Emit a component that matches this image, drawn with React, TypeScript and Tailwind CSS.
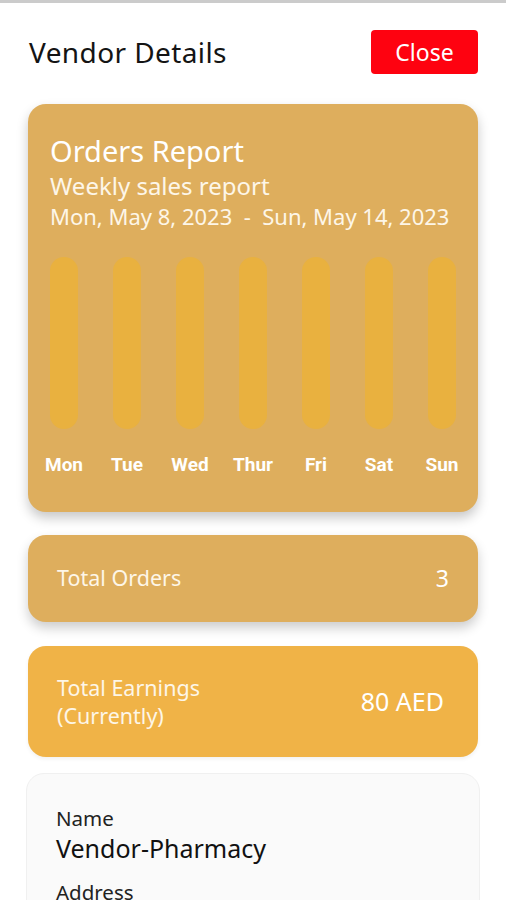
import React from "react";

const days = ["Mon", "Tue", "Wed", "Thur", "Fri", "Sat", "Sun"];

export default function App() {
  return (
    <div className="h-[900px] bg-white border-t-[3px] border-[#cbcbcb] font-['Noto_Sans',sans-serif] overflow-hidden">
      <div className="flex items-center justify-between pl-[29px] pr-[28px] pt-[27px]">
        <h1 className="text-[28px] leading-[34px] tracking-[0.4px] text-[#141414]">Vendor Details</h1>
        <button className="h-[44px] w-[107px] rounded-[4px] bg-[#fe0210] text-white text-[23px] leading-none">
          Close
        </button>
      </div>

      <div className="px-[28px] mt-[30px] flex flex-col">
        <div className="h-[408px] rounded-[18px] bg-[#deae5d] shadow-[0_6px_12px_rgba(0,0,0,0.22)] px-[22px] pt-[28px] text-white">
          <div className="text-[29px] leading-[38px]">Orders Report</div>
          <div className="text-[24px] leading-[30px] text-[#fdf6e8] mt-[1px]">Weekly sales report</div>
          <div className="text-[22px] leading-[28px] text-[#fdf6e8] mt-[1px] whitespace-nowrap">
            Mon, May 8, 2023&nbsp; -&nbsp; Sun, May 14, 2023
          </div>
          <div className="flex justify-between mt-[27px]">
            {days.map((d) => (
              <div key={d} className="flex flex-col items-center w-[28px]">
                <div className="h-[172px] w-[28px] rounded-full bg-[#e9b13f]" />
                <div className="mt-[24px] text-[19px] leading-[24px] font-bold font-['Roboto',sans-serif] whitespace-nowrap">{d}</div>
              </div>
            ))}
          </div>
        </div>

        <div className="mt-[23px] h-[87px] rounded-[18px] bg-[#deae5d] shadow-[0_6px_12px_rgba(0,0,0,0.2)] flex items-center justify-between pl-[29px] pr-[29px] text-white">
          <span className="text-[21.5px] text-[#fdf6e8]">Total Orders</span>
          <span className="text-[23px]">3</span>
        </div>

        <div className="mt-[24px] h-[111px] rounded-[18px] bg-[#f0b347] shadow-[0_2px_4px_rgba(0,0,0,0.06)] flex items-center justify-between pl-[29px] pr-[34px] text-white">
          <span className="text-[21.5px] leading-[28px] text-[#fdf6e8]">
            Total Earnings
            <br />
            (Currently)
          </span>
          <span className="text-[25px]">80 AED</span>
        </div>

        <div className="mt-[16px] -mx-[2px] h-[200px] rounded-[18px] bg-[#fafafa] border border-[#f0f0f0] pl-[29px] pt-[30px]">
          <div className="text-[20.5px] leading-[28px] text-[#222]">Name</div>
          <div className="text-[25px] leading-[32px] text-[#111]">Vendor-Pharmacy</div>
          <div className="text-[20.5px] leading-[28px] text-[#222] mt-[14px]">Address</div>
        </div>
      </div>
    </div>
  );
}
